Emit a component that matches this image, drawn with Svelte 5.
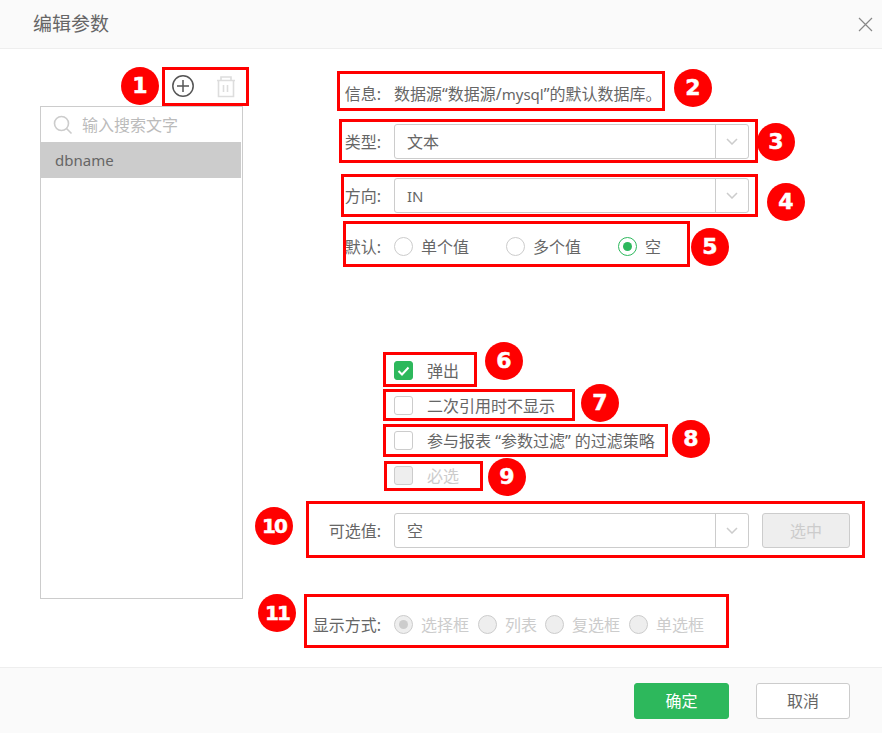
<script>
    const marks = [
        { n: 1, box: [162, 67, 87, 39], dot: [140, 86] },
        { n: 2, box: [337, 71, 328, 40], dot: [693, 88] },
        { n: 3, box: [339, 119, 419, 44], dot: [776, 142] },
        { n: 4, box: [341, 174, 417, 43], dot: [786, 202] },
        { n: 5, box: [343, 221, 347, 46], dot: [710, 247] },
        { n: 6, box: [383, 352, 94, 35], dot: [504, 361] },
        { n: 7, box: [383, 389, 192, 32], dot: [600, 403] },
        { n: 8, box: [383, 424, 285, 33], dot: [691, 439] },
        { n: 9, box: [384, 461, 99, 30], dot: [507, 477] },
        { n: 10, box: [306, 501, 559, 57], dot: [274, 526] },
        { n: 11, box: [304, 594, 425, 54], dot: [277, 613] }
    ];

    const defaults = [
        { label: '单个值', on: false, width: 112 },
        { label: '多个值', on: false, width: 112 },
        { label: '空', on: true, width: 60 }
    ];

    const checks = [
        { label: '弹出', on: true },
        { label: '二次引用时不显示', on: false },
        { label: '参与报表 “参数过滤” 的过滤策略', on: false },
        { label: '必选', on: false, disabled: true }
    ];

    const displays = [
        { label: '选择框', on: true, width: 84 },
        { label: '列表', on: false, width: 67 },
        { label: '复选框', on: false, width: 84 },
        { label: '单选框', on: false, width: 84 }
    ];
</script>

{#snippet arrow()}
    <span class="select-arrow">
        <svg width="12" height="7" viewBox="0 0 12 7" fill="none" aria-hidden="true">
            <path d="M1 1l5 5 5-5" stroke="#ccc" stroke-width="1.5" />
        </svg>
    </span>
{/snippet}

<div class="dialog">
    <header class="head">
        <h1>编辑参数</h1>
        <svg class="close" width="15" height="15" viewBox="0 0 15 15" fill="none" aria-hidden="true">
            <path d="M1 1l13 13M14 1L1 14" stroke="#888" stroke-width="1.2" />
        </svg>
    </header>

    <main class="content">
        <section class="side">
            <div class="tools">
                <svg width="24" height="24" viewBox="0 0 24 24" fill="none" aria-hidden="true">
                    <circle cx="12" cy="12" r="10.2" stroke="#555" stroke-width="1.5" />
                    <path d="M12 6v12M6 12h12" stroke="#555" stroke-width="1.5" />
                </svg>
                <svg width="20" height="24" viewBox="0 0 20 24" fill="none" aria-hidden="true">
                    <path d="M1 6.5h18M5 6.5V3h10v3.5M2.5 6.5v16h15v-16M7.5 11v7M11.5 11v7" stroke="#ddd" stroke-width="1.6" />
                </svg>
            </div>
            <div class="list">
                <div class="search">
                    <svg width="20" height="20" viewBox="0 0 20 20" fill="none" aria-hidden="true">
                        <circle cx="8.5" cy="8.5" r="7" stroke="#ccc" stroke-width="1.6" />
                        <path d="M13.5 13.5l5 5" stroke="#ccc" stroke-width="1.6" />
                    </svg>
                    <span>输入搜索文字</span>
                </div>
                <div class="item">dbname</div>
            </div>
        </section>

        <section class="form">
            <div class="row info">
                <span class="label">信息:</span>
                <span class="info-text">数据源“数据源/<span class="latin">mysql</span>”的默认数据库。</span>
            </div>
            <div class="row type">
                <span class="label">类型:</span>
                <div class="select"><span class="value">文本</span>{@render arrow()}</div>
            </div>
            <div class="row direction">
                <span class="label">方向:</span>
                <div class="select"><span class="value latin">IN</span>{@render arrow()}</div>
            </div>
            <div class="row default">
                <span class="label">默认:</span>
                {#each defaults as opt}
                    <span class="radio-opt" style:width="{opt.width}px">
                        <span class="radio" class:on={opt.on}></span>{opt.label}
                    </span>
                {/each}
            </div>

            <div class="checks">
                {#each checks as c}
                    <div class="check-row" class:disabled={c.disabled}>
                        <span class="check" class:on={c.on}>
                            {#if c.on}
                                <svg width="13" height="10" viewBox="0 0 13 10" fill="none" aria-hidden="true">
                                    <path d="M1.5 5l3.5 3.5 6.5-7" stroke="#fff" stroke-width="2" />
                                </svg>
                            {/if}
                        </span>
                        <span>{c.label}</span>
                    </div>
                {/each}
            </div>

            <div class="row options">
                <span class="label">可选值:</span>
                <div class="select"><span class="value">空</span>{@render arrow()}</div>
                <button class="pick" disabled>选中</button>
            </div>
            <div class="row display">
                <span class="label">显示方式:</span>
                {#each displays as opt}
                    <span class="radio-opt off" style:width="{opt.width}px">
                        <span class="radio" class:on={opt.on}></span>{opt.label}
                    </span>
                {/each}
            </div>
        </section>
    </main>

    <footer class="foot">
        <button class="ok">确定</button>
        <button class="cancel">取消</button>
    </footer>

    {#each marks as m}
        <div class="mark-box" style="left:{m.box[0]}px;top:{m.box[1]}px;width:{m.box[2]}px;height:{m.box[3]}px"></div>
        <div class="mark-dot" class:two={m.n > 9} style="left:{m.dot[0] - 19}px;top:{m.dot[1] - 19}px">{m.n}</div>
    {/each}
</div>

<style>
    :global(body) {
        margin: 0;
        background: #fff;
    }

    .dialog {
        position: relative;
        width: 882px;
        height: 733px;
        display: flex;
        flex-direction: column;
        overflow: hidden;
        font-family: "Noto Sans", "Noto Sans CJK SC", sans-serif;
        font-size: 16px;
        line-height: 22px;
        color: #666;
    }

    .latin {
        font-size: 15px;
    }

    .head {
        flex: none;
        height: 48px;
        box-sizing: content-box;
        display: flex;
        align-items: center;
        justify-content: space-between;
        padding: 0 9px 0 33px;
        background: #fafafa;
        border-bottom: 1px solid #eee;
    }

    .head h1 {
        margin: 0;
        font-size: 19px;
        font-weight: 400;
        color: #666;
    }

    .content {
        flex: 1;
        display: flex;
        padding-left: 40px;
    }

    .side {
        width: 203px;
        margin-right: 69px;
    }

    .tools {
        height: 57px;
        padding: 25px 0 0 131px;
        box-sizing: border-box;
        display: flex;
        align-items: flex-start;
        gap: 21px;
    }

    .list {
        height: 493px;
        box-sizing: border-box;
        border: 1px solid #ccc;
    }

    .search {
        height: 35px;
        display: flex;
        align-items: center;
        gap: 9px;
        padding-left: 12px;
        color: #bbb;
    }

    .item {
        height: 36px;
        line-height: 37px;
        width: 200px;
        padding-left: 14px;
        box-sizing: border-box;
        background: #ccc;
        font-size: 15px;
    }

    .form {
        width: 552px;
    }

    .row {
        display: flex;
        align-items: center;
        height: 35px;
    }

    .label {
        flex: none;
        width: 69px;
        margin-right: 13px;
        text-align: right;
        white-space: nowrap;
    }

    .info {
        height: 30px;
        margin-top: 30px;
    }

    .info-text {
        white-space: nowrap;
    }

    .type {
        margin-top: 15px;
    }

    .direction {
        margin-top: 19px;
    }

    .default {
        margin-top: 16px;
    }

    .select {
        width: 355px;
        height: 35px;
        box-sizing: border-box;
        border: 1px solid #ccc;
        border-radius: 3px;
        display: flex;
        align-items: center;
        justify-content: space-between;
    }

    .value {
        padding-left: 12px;
    }

    .select-arrow {
        width: 32px;
        height: 100%;
        border-left: 1px solid #ccc;
        display: flex;
        align-items: center;
        justify-content: center;
    }

    .radio-opt {
        flex: none;
        display: flex;
        align-items: center;
        gap: 8px;
        white-space: nowrap;
    }

    .radio {
        flex: none;
        width: 19px;
        height: 19px;
        box-sizing: border-box;
        border: 1px solid #ccc;
        border-radius: 50%;
        display: flex;
        align-items: center;
        justify-content: center;
    }

    .radio.on {
        border-color: #2db85c;
    }

    .radio.on::after {
        content: "";
        width: 9px;
        height: 9px;
        border-radius: 50%;
        background: #2db85c;
    }

    .off {
        color: #ccc;
    }

    .off .radio {
        background: #eee;
        border-color: #ccc;
    }

    .off .radio.on {
        border-color: #ccc;
    }

    .off .radio.on::after {
        background: #ccc;
    }

    .checks {
        margin-top: 89px;
        padding-left: 82px;
    }

    .check-row {
        height: 35px;
        display: flex;
        align-items: center;
        gap: 14px;
        white-space: nowrap;
    }

    .check-row.disabled {
        color: #ccc;
    }

    .check {
        flex: none;
        width: 19px;
        height: 19px;
        box-sizing: border-box;
        border: 1px solid #ccc;
        border-radius: 3px;
        display: flex;
        align-items: center;
        justify-content: center;
    }

    .check.on {
        background: #2db85c;
        border-color: #2db85c;
    }

    .check-row.disabled .check {
        background: #eee;
    }

    .options {
        margin-top: 20px;
    }

    .pick {
        width: 88px;
        height: 35px;
        margin-left: 13px;
        border: 1px solid #ccc;
        border-radius: 3px;
        background: #eee;
        color: #ccc;
        font: inherit;
    }

    .display {
        margin-top: 59px;
    }

    .foot {
        flex: none;
        height: 66px;
        box-sizing: border-box;
        border-top: 1px solid #eee;
        background: #fafafa;
        display: flex;
        justify-content: flex-end;
        align-items: flex-start;
        gap: 27px;
        padding: 15px 32px 0 0;
    }

    .foot button {
        height: 36px;
        border-radius: 3px;
        font: inherit;
        box-sizing: border-box;
    }

    .ok {
        width: 95px;
        border: 1px solid #2db85c;
        background: #2db85c;
        color: #fff;
    }

    .cancel {
        width: 94px;
        border: 1px solid #ccc;
        background: #fff;
        color: #666;
    }

    .mark-box {
        position: absolute;
        box-sizing: border-box;
        border: 3px solid #f00;
    }

    .mark-dot {
        position: absolute;
        width: 38px;
        height: 38px;
        border-radius: 50%;
        background: #f00;
        color: #fff;
        display: flex;
        align-items: center;
        justify-content: center;
        font-family: "DejaVu Sans", sans-serif;
        font-weight: 700;
        font-size: 22px;
        -webkit-text-stroke: 0.5px #fff;
    }

    .mark-dot.two {
        font-size: 20px;
        letter-spacing: -2px;
    }
</style>
